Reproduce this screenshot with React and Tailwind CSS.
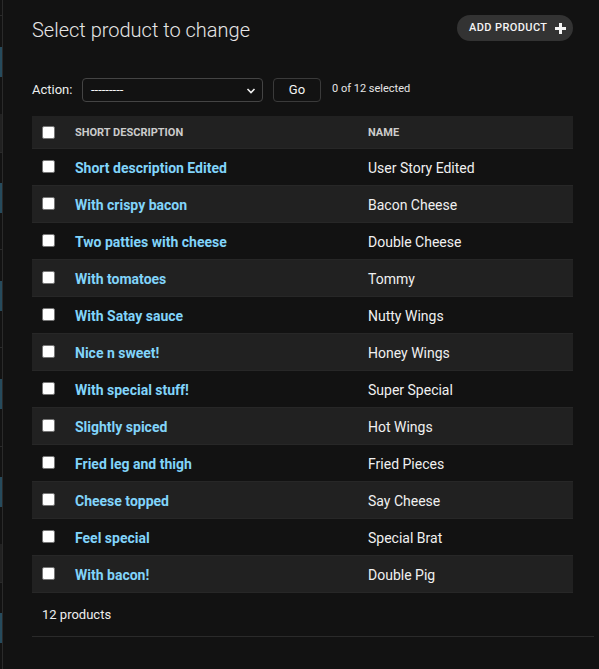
import React from "react";

const products = [
  ["Short description Edited", "User Story Edited"],
  ["With crispy bacon", "Bacon Cheese"],
  ["Two patties with cheese", "Double Cheese"],
  ["With tomatoes", "Tommy"],
  ["With Satay sauce", "Nutty Wings"],
  ["Nice n sweet!", "Honey Wings"],
  ["With special stuff!", "Super Special"],
  ["Slightly spiced", "Hot Wings"],
  ["Fried leg and thigh", "Fried Pieces"],
  ["Cheese topped", "Say Cheese"],
  ["Feel special", "Special Brat"],
  ["With bacon!", "Double Pig"],
];

// leftover of the collapsed nav sidebar: [height, colour, line below]
const navBits = [
  [16, "bg-[#121212]", true],
  [31, "bg-[#121212]"],
  [30, "bg-[#264b5d]"],
  [37, "bg-[#121212]"],
  [39, "bg-[#212121]", true],
  [30, "bg-[#121212]"],
  [30, "bg-[#264b5d]"],
  [37, "bg-[#121212]", true],
  [31, "bg-[#121212]"],
  [30, "bg-[#264b5d]"],
  [37, "bg-[#121212]", true],
  [31, "bg-[#121212]"],
  [30, "bg-[#264b5d]"],
  [38, "bg-[#121212]", true],
  [30, "bg-[#121212]"],
  [30, "bg-[#264b5d]"],
  [37, "bg-[#121212]"],
  [39, "bg-[#212121]", true],
  [30, "bg-[#121212]"],
  [30, "bg-[#264b5d]"],
  [26, "bg-[#121212]"],
];

function Checkbox() {
  return (
    <span className="block w-[13px] h-[13px] rounded-[2px] bg-white border border-[#767676]"></span>
  );
}

export default function App() {
  return (
    <div
      className="min-h-[669px] bg-[#121212] flex text-[#f5f5f5]"
      style={{ fontFamily: "Roboto, 'Liberation Sans', sans-serif" }}
    >
      <div className="w-[3px] shrink-0 border-r border-[#2a2a2a] flex flex-col">
        {navBits.map(([h, bg, line], i) => (
          <div
            key={i}
            className={`${bg} ${line ? "border-b border-[#2a2a2a]" : ""}`}
            style={{ height: h }}
          ></div>
        ))}
      </div>

      <div className="flex-1 pl-[29px] pr-[26px] pt-[15px]">
        <div className="flex items-start justify-between">
          <h1 className="text-[20px] font-light text-[#e6e6e6] leading-[26px] pt-[2px]">
            Select product to change
          </h1>
          <button className="shrink-0 whitespace-nowrap w-[116px] h-[26px] rounded-full bg-[#333333] pl-[12px] pr-[7px] flex items-center justify-between text-[11px] font-medium tracking-[0.4px] text-[#f5f5f5]">
            ADD PRODUCT
            <svg width="11" height="11" viewBox="0 0 11 11">
              <path d="M4 0h3v4h4v3H7v4H4V7H0V4h4z" fill="#f5f5f5" />
            </svg>
          </button>
        </div>

        <div className="flex items-center mt-[34px] h-[24px] pt-[1px]">
          <span className="text-[13px] text-[#eeeeee] w-[50px]">Action:</span>
          <div className="relative w-[181px] h-[24px] border border-[#444444] rounded-[4px] flex items-center pl-[8px] text-[13px]">
            ---------
            <svg
              className="absolute right-[6px] top-[7px]"
              width="10"
              height="10"
              viewBox="0 0 10 10"
              fill="none"
              stroke="#f0f0f0"
              strokeWidth="1.6"
            >
              <path d="M1.5 3l3.5 3.5L8.5 3" />
            </svg>
          </div>
          <button className="ml-[10px] w-[48px] h-[24px] border border-[#3a3a3a] rounded-[4px] text-[13px] text-[#f5f5f5]">
            Go
          </button>
          <span className="ml-[11px] text-[11px] text-[#e6e6e6]">0 of 12 selected</span>
        </div>

        <div className="mt-[15px]">
          <div className="flex items-center h-[33px] pt-[3px] bg-[#212121] border-b border-[#272727] text-[11px] font-bold text-[#cccccc] uppercase">
            <div className="w-[43px] pl-[10px] pb-[3px]">
              <Checkbox />
            </div>
            <div className="w-[293px]">Short description</div>
            <div>Name</div>
          </div>
          {products.map(([desc, name], i) => (
            <div
              key={desc}
              className={`flex items-center h-[37px] pt-[2px] border-b border-[#272727] ${
                i % 2 === 1 ? "bg-[#212121]" : "bg-[#121212]"
              }`}
            >
              <div className="w-[43px] pl-[10px] pb-[4px]">
                <Checkbox />
              </div>
              <div className="w-[293px] text-[14px] font-bold text-[#81d4fa]">{desc}</div>
              <div className="text-[14px] text-[#f0f0f0]">{name}</div>
            </div>
          ))}
        </div>

        <div className="mr-[-21px] h-[44px] flex items-center pl-[10px] text-[13px] text-[#eeeeee] border-b border-[#2a2a2a]">
          12 products
        </div>
      </div>
    </div>
  );
}
